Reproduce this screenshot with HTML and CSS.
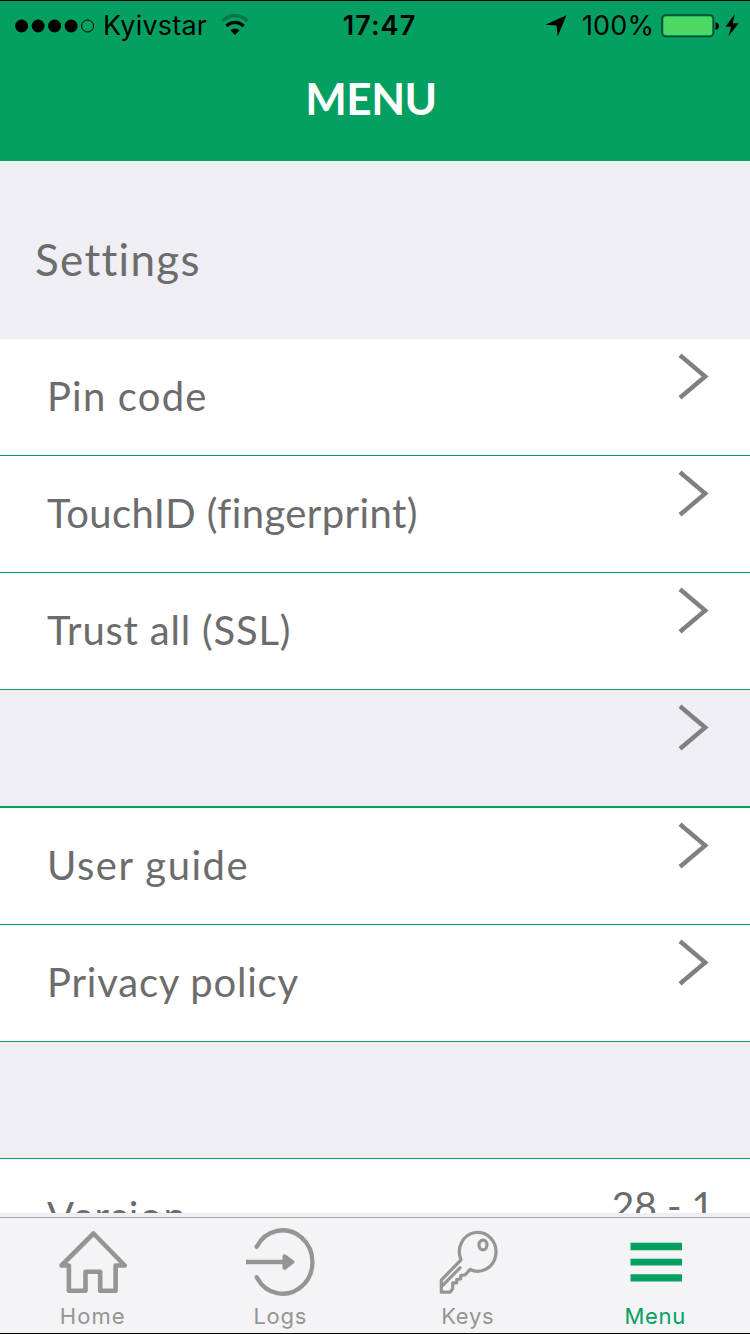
FILE: index.html
```html
<!DOCTYPE html>
<html lang="en">
<head>
<meta charset="utf-8">
<title>Menu</title>
<link rel="stylesheet" href="styles.css">
</head>
<body>
<div class="screen">
  <header class="header">
    <div class="status">
      <div class="status-left">
        <svg class="dots" width="80" height="14" viewBox="0 0 80 14"><circle cx="6.6" cy="7" r="6.5"/><circle cx="23.1" cy="7" r="6.5"/><circle cx="39.6" cy="7" r="6.5"/><circle cx="56.1" cy="7" r="6.5"/><circle cx="72.6" cy="7" r="6" fill="none" stroke="#000" stroke-width="1"/></svg>
        <span class="carrier">Kyivstar</span>
        <svg class="wifi" width="28" height="22" viewBox="0 0 28 22" fill="none" stroke="#000"><path d="M1.300 7Q14-4 26.700 7" stroke="#027548" stroke-width="3.300"/><path d="M5.300 12Q14 4.900 22.700 12" stroke-width="3.200"/><path d="M14 21L9.400 16.300Q14 12.600 18.600 16.300Z" fill="#000" stroke="none"/></svg>
      </div>
      <span class="clock">17:47</span>
      <div class="status-right">
        <svg class="location" width="22" height="22" viewBox="0 0 22 22"><path d="M21.500 .3L12.700 21.500L11.600 10.500L.3 9.700Z"/></svg>
        <span class="percent">100%</span>
        <svg class="battery" width="58" height="24" viewBox="0 0 58 24"><rect x="1" y="1" width="51.500" height="21.500" rx="4" fill="none" stroke="#034a2e" stroke-width="1.600"/><rect x="2.500" y="2.500" width="48.500" height="18.500" rx="2.500" fill="#4cd964"/><path d="M54.500 8Q58 9 58 12T54.500 16Z"/></svg>
        <svg class="bolt" width="14" height="23" viewBox="0 0 14 23"><path d="M10 0L.4 12.700L6.200 12.700L3.400 22.300L13.700 9.300L7.600 9.300Z"/></svg>
      </div>
    </div>
    <h1 class="title">MENU</h1>
  </header>
  <main class="content">
    <h2 class="section">Settings</h2>
    <div class="row"><span class="label wide">Pin code</span><svg class="chevron" viewBox="0 0 32 48"><path d="M2 2.200L27.200 23.500L2 44.800"/></svg></div>
    <div class="row"><span class="label tight">TouchID (fingerprint)</span><svg class="chevron" viewBox="0 0 32 48"><path d="M2 2.200L27.200 23.500L2 44.800"/></svg></div>
    <div class="row"><span class="label medium">Trust all (SSL)</span><svg class="chevron" viewBox="0 0 32 48"><path d="M2 2.200L27.200 23.500L2 44.800"/></svg></div>
    <div class="row gap thick"><span class="label"></span><svg class="chevron" viewBox="0 0 32 48"><path d="M2 2.200L27.200 23.500L2 44.800"/></svg></div>
    <div class="row"><span class="label wider">User guide</span><svg class="chevron" viewBox="0 0 32 48"><path d="M2 2.200L27.200 23.500L2 44.800"/></svg></div>
    <div class="row"><span class="label medium">Privacy policy</span><svg class="chevron" viewBox="0 0 32 48"><path d="M2 2.200L27.200 23.500L2 44.800"/></svg></div>
    <div class="row gap"></div>
    <div class="row version"><span class="label wide">Version</span><span class="value">28 - 1</span></div>
  </main>
  <nav class="tabs">
    <a class="tab"><svg class="icon" viewBox="0.8 0 70 70" stroke-width="4.600"><path d="M35.300 5.500L66.500 37.500H57.400V62.700H42V43.700H27.300V62.700H10.700V37.500H3.300Z"/></svg><span class="caption home">Home</span></a>
    <a class="tab"><svg class="icon" viewBox="0 0 70 70" stroke-width="4.300"><path d="M10.700 18.800A29.700 31.700 0 1 1 10.700 49.200"/><path d="M0 34H38"/><path d="M38.500 28.200L46.500 34L38.500 39.800Z" fill="#959595" stroke-width="4"/></svg><span class="caption">Logs</span></a>
    <a class="tab"><svg class="icon" viewBox="1 0.5 70 70" stroke-width="3.200"><path d="M28 32.300L8.300 52.700V64.700H17L19.700 61.300V55.300H23.700V52L27.700 51.300V48L32.300 47.300L37 42A18.300 19.500 0 1 0 28 32.300ZM27 40.300L9 58.700"/><ellipse cx="50" cy="17.500" rx="4" ry="4.800"/></svg><span class="caption">Keys</span></a>
    <a class="tab active"><svg class="icon bars" viewBox="0 0 70 70"><path d="M9.500 14.800H61V22.200H9.500ZM9.500 30.800H61V37.600H9.500ZM9.500 46.200H61V53.600H9.500Z"/></svg><span class="caption">Menu</span></a>
  </nav>
</div>
</body>
</html>
```
FILE: styles.css
```css
body { margin: 0; }
.screen {
  width: 750px;
  height: 1334px;
  box-sizing: border-box;
  border-top: 1px solid #000;
  border-bottom: 1px solid #000;
  display: flex;
  flex-direction: column;
  overflow: hidden;
  background: #efeef4;
  font-family: Lato, "Open Sans", sans-serif;
  color: #6c6c6c;
}
.header { height: 160px; flex: none; background: #03a062; }
.status {
  height: 49px;
  display: grid;
  grid-template-columns: 1fr auto 1fr;
  align-items: center;
  color: #000;
  font: 27px/32px Inter, sans-serif;
}
.status-left, .status-right { display: flex; align-items: center; }
.status-left { padding-left: 15px; }
.status-right { justify-content: flex-end; padding-right: 11px; }
.carrier { margin-left: 8px; letter-spacing: 0.2px; }
.wifi { margin-left: 14px; margin-bottom: 1px; }
.clock { font-weight: 600; letter-spacing: 1.1px; margin-left: 9px; }
.location { margin-right: 15px; }
.percent { margin-right: 7px; letter-spacing: 0.1px; }
.bolt { margin-left: 6px; }
.title {
  margin: 21px 0 0;
  padding-right: 8px;
  text-align: center;
  color: #fff;
  font-size: 44px;
  line-height: 54px;
  font-weight: 700;
  letter-spacing: -0.5px;
}
.content { height: 1052px; flex: none; overflow: hidden; }
.section {
  margin: 0;
  height: 178px;
  box-sizing: border-box;
  padding: 71px 0 0 35px;
  font-size: 44px;
  line-height: 54px;
  font-weight: 400;
  letter-spacing: 1.3px;
}
.row {
  height: 117px;
  box-sizing: border-box;
  border-bottom: 1px solid #03a062;
  background: #fff;
  display: flex;
  justify-content: space-between;
  align-items: flex-start;
  padding: 0 40px 0 47px;
  font-size: 40px;
  line-height: 50px;
}
.row.gap { background: #efeef4; }
.row.thick { height: 118px; border-bottom-width: 2px; }
.row.version { padding-right: 36px; }
.label { margin-top: 32px; }
.tight { letter-spacing: 0.4px; }
.medium { letter-spacing: 0.8px; }
.wide { letter-spacing: 1.2px; }
.wider { letter-spacing: 1.5px; }
.value { margin-top: 21px; font-size: 39px; }
.chevron {
  width: 32px;
  height: 48px;
  margin-top: 14px;
  fill: none;
  stroke: #808083;
  stroke-width: 4.4;
}
.tabs {
  flex: 1;
  margin-top: 4px;
  border-top: 1px solid #a6a6aa;
  background: #f4f4f6;
  display: grid;
  grid-template-columns: repeat(4, 1fr);
  color: #959595;
  font: 22px/28px Inter, sans-serif;
}
.tab { display: flex; flex-direction: column; align-items: center; padding-top: 10px; }
.icon {
  width: 70px;
  height: 70px;
  margin-bottom: 4px;
  fill: none;
  stroke: #959595;
  stroke-linejoin: round;
  stroke-linecap: round;
}
.caption { letter-spacing: 0.7px; padding-right: 2px; }
.home { letter-spacing: 1.1px; }
.active { color: #03a062; }
.bars { fill: #03a062; stroke: none; }
```
